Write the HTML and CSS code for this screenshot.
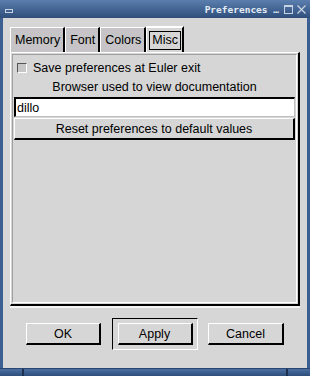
FILE: index.html
```html
<!DOCTYPE html>
<html>
<head>
	<title>Preferences</title>
	<meta charset="utf-8">
	<link rel="stylesheet" href="styles.css">
</head>
<body>
	<div class="window">
		<div class="titlebar">
			<span class="minimize"></span>
			<span class="title">Preferences …</span>
			<span class="maximize"></span>
			<span class="close">
				<svg width="9" height="9" viewBox="0 0 9 9"><path d="M0.5 0.5 L8.5 8.5 M8.5 0.5 L0.5 8.5" stroke="#c8d4e4" stroke-width="1.2" fill="none"/></svg>
			</span>
		</div>
		<div class="frame">
			<div class="tabs">
				<div class="tab">Memory</div>
				<div class="tab">Font</div>
				<div class="tab">Colors</div>
				<div class="tab active"><span class="focus">Misc</span></div>
			</div>
			<div class="panel">
				<div class="inner">
					<label class="check"><span class="box"></span>Save preferences at Euler exit</label>
					<div class="caption">Browser used to view documentation</div>
					<div class="input">dillo</div>
					<button class="btn wide">Reset preferences to default values</button>
				</div>
			</div>
			<div class="buttons">
				<button class="btn">OK</button>
				<div class="default"><button class="btn">Apply</button></div>
				<button class="btn cancel">Cancel</button>
			</div>
		</div>
		<div class="statusbar">
			<span class="seg first"></span>
			<span class="seg mid"></span>
			<span class="seg last"></span>
		</div>
	</div>
</body>
</html>
```
FILE: styles.css
```css
body {
	margin: 0;
	font-family: "Liberation Sans", Arial, sans-serif;
	font-size: 12.5px;
	color: #000;
	background: #d6d6d6;
}
.window {
	width: 310px;
	height: 376px;
	display: flex;
	flex-direction: column;
}
.titlebar {
	height: 18px;
	flex-shrink: 0;
	background: linear-gradient(#5a7eae, #2f4e7b);
	display: flex;
	align-items: center;
	color: #e4ecf6;
	padding: 0 4px 0 5px;
}
.minimize {
	width: 6px;
	height: 2px;
	border: 1px solid #c8d4e4;
	margin-top: 3px;
}
.title {
	margin-left: auto;
	font-family: "DejaVu Sans Mono", monospace;
	font-size: 9.5px;
	font-weight: bold;
	margin-right: 5px;
}
.maximize {
	width: 7px;
	height: 6px;
	border: 1px solid #c8d4e4;
	border-top-width: 2px;
	margin-right: 4px;
}
.close {
	display: flex;
}
.frame {
	flex: 1;
	border-left: 3px solid #3a5f90;
	border-right: 3px solid #3a5f90;
	background: #d6d6d6;
	display: flex;
	flex-direction: column;
	padding: 8px 7px 0 7px;
}
.tabs {
	display: flex;
	align-items: flex-end;
	height: 26px;
}
.tab {
	height: 25px;
	line-height: 24px;
	padding: 0 3px 0 4px;
	background: #c6c4c6;
	border-top: 1px solid #fff;
	border-left: 1px solid #fff;
	border-right: 2px solid #000;
	box-sizing: border-box;
}
.tab.active {
	height: 26px;
	background: #d6d6d6;
	padding: 3px 1px 2px 2px;
	line-height: normal;
	border-top: 2px solid #fff;
}
.focus {
	display: block;
	border: 1px solid #000;
	padding: 0 2px;
	height: 19px;
	box-sizing: border-box;
	line-height: 17px;
}
.panel {
	height: 254px;
	flex-shrink: 0;
	box-sizing: border-box;
	border-top: 1px solid #fff;
	border-left: 1px solid #fff;
	border-right: 2px solid #000;
	border-bottom: 2px solid #000;
	padding: 1px;
	box-shadow: 0 2px 0 #f4f4f4;
}
.inner {
	height: 100%;
	box-sizing: border-box;
	border: 1px solid #a0a0a0;
	border-right-color: #fff;
	border-bottom-color: #fff;
	padding: 7px 1px 0 1px;
}
.check {
	display: flex;
	align-items: center;
	padding-left: 3px;
	height: 12px;
}
.box {
	width: 8px;
	height: 8px;
	background: #c6c6c6;
	border-top: 1px solid #555;
	border-left: 1px solid #555;
	border-right: 1px solid #fff;
	border-bottom: 1px solid #fff;
	margin-right: 6px;
}
.caption {
	text-align: center;
	height: 19px;
	line-height: 19px;
	margin-top: 4px;
}
.input {
	height: 20px;
	line-height: 18px;
	box-sizing: border-box;
	background: #fff;
	border-top: 2px solid #000;
	border-left: 2px solid #000;
	border-right: 1px solid #c0c0c0;
	border-bottom: 1px solid #c0c0c0;
	padding-left: 1px;
}
.btn {
	font-family: inherit;
	font-size: 12.5px;
	background: #d6d6d6;
	border-top: 1px solid #fff;
	border-left: 1px solid #fff;
	border-right: 2px solid #000;
	border-bottom: 2px solid #000;
	height: 22px;
	width: 75px;
	padding: 0;
	color: #000;
}
.btn.cancel {
	width: 76px;
}
.btn.wide {
	display: block;
	width: 100%;
	height: 22px;
	margin-top: 1px;
}
.buttons {
	display: flex;
	align-items: center;
	justify-content: space-between;
	padding: 12px 16px 0 16px;
}
.default {
	border-top: 1px solid #000;
	border-left: 1px solid #000;
	border-right: 1px solid #fff;
	border-bottom: 1px solid #fff;
	padding: 4px 4px 4px 5px;
	display: flex;
}
.statusbar {
	height: 7px;
	flex-shrink: 0;
	display: flex;
	background: #3a5f90;
	border-top: 1px solid #2a4670;
}
.seg {
	height: 100%;
	background: linear-gradient(#4a70a2, #2f4e7b);
}
.seg.first {
	width: 22px;
	border-right: 2px solid #1e3050;
}
.seg.mid {
	flex: 1;
	border-right: 2px solid #1e3050;
}
.seg.last {
	width: 22px;
}
```
